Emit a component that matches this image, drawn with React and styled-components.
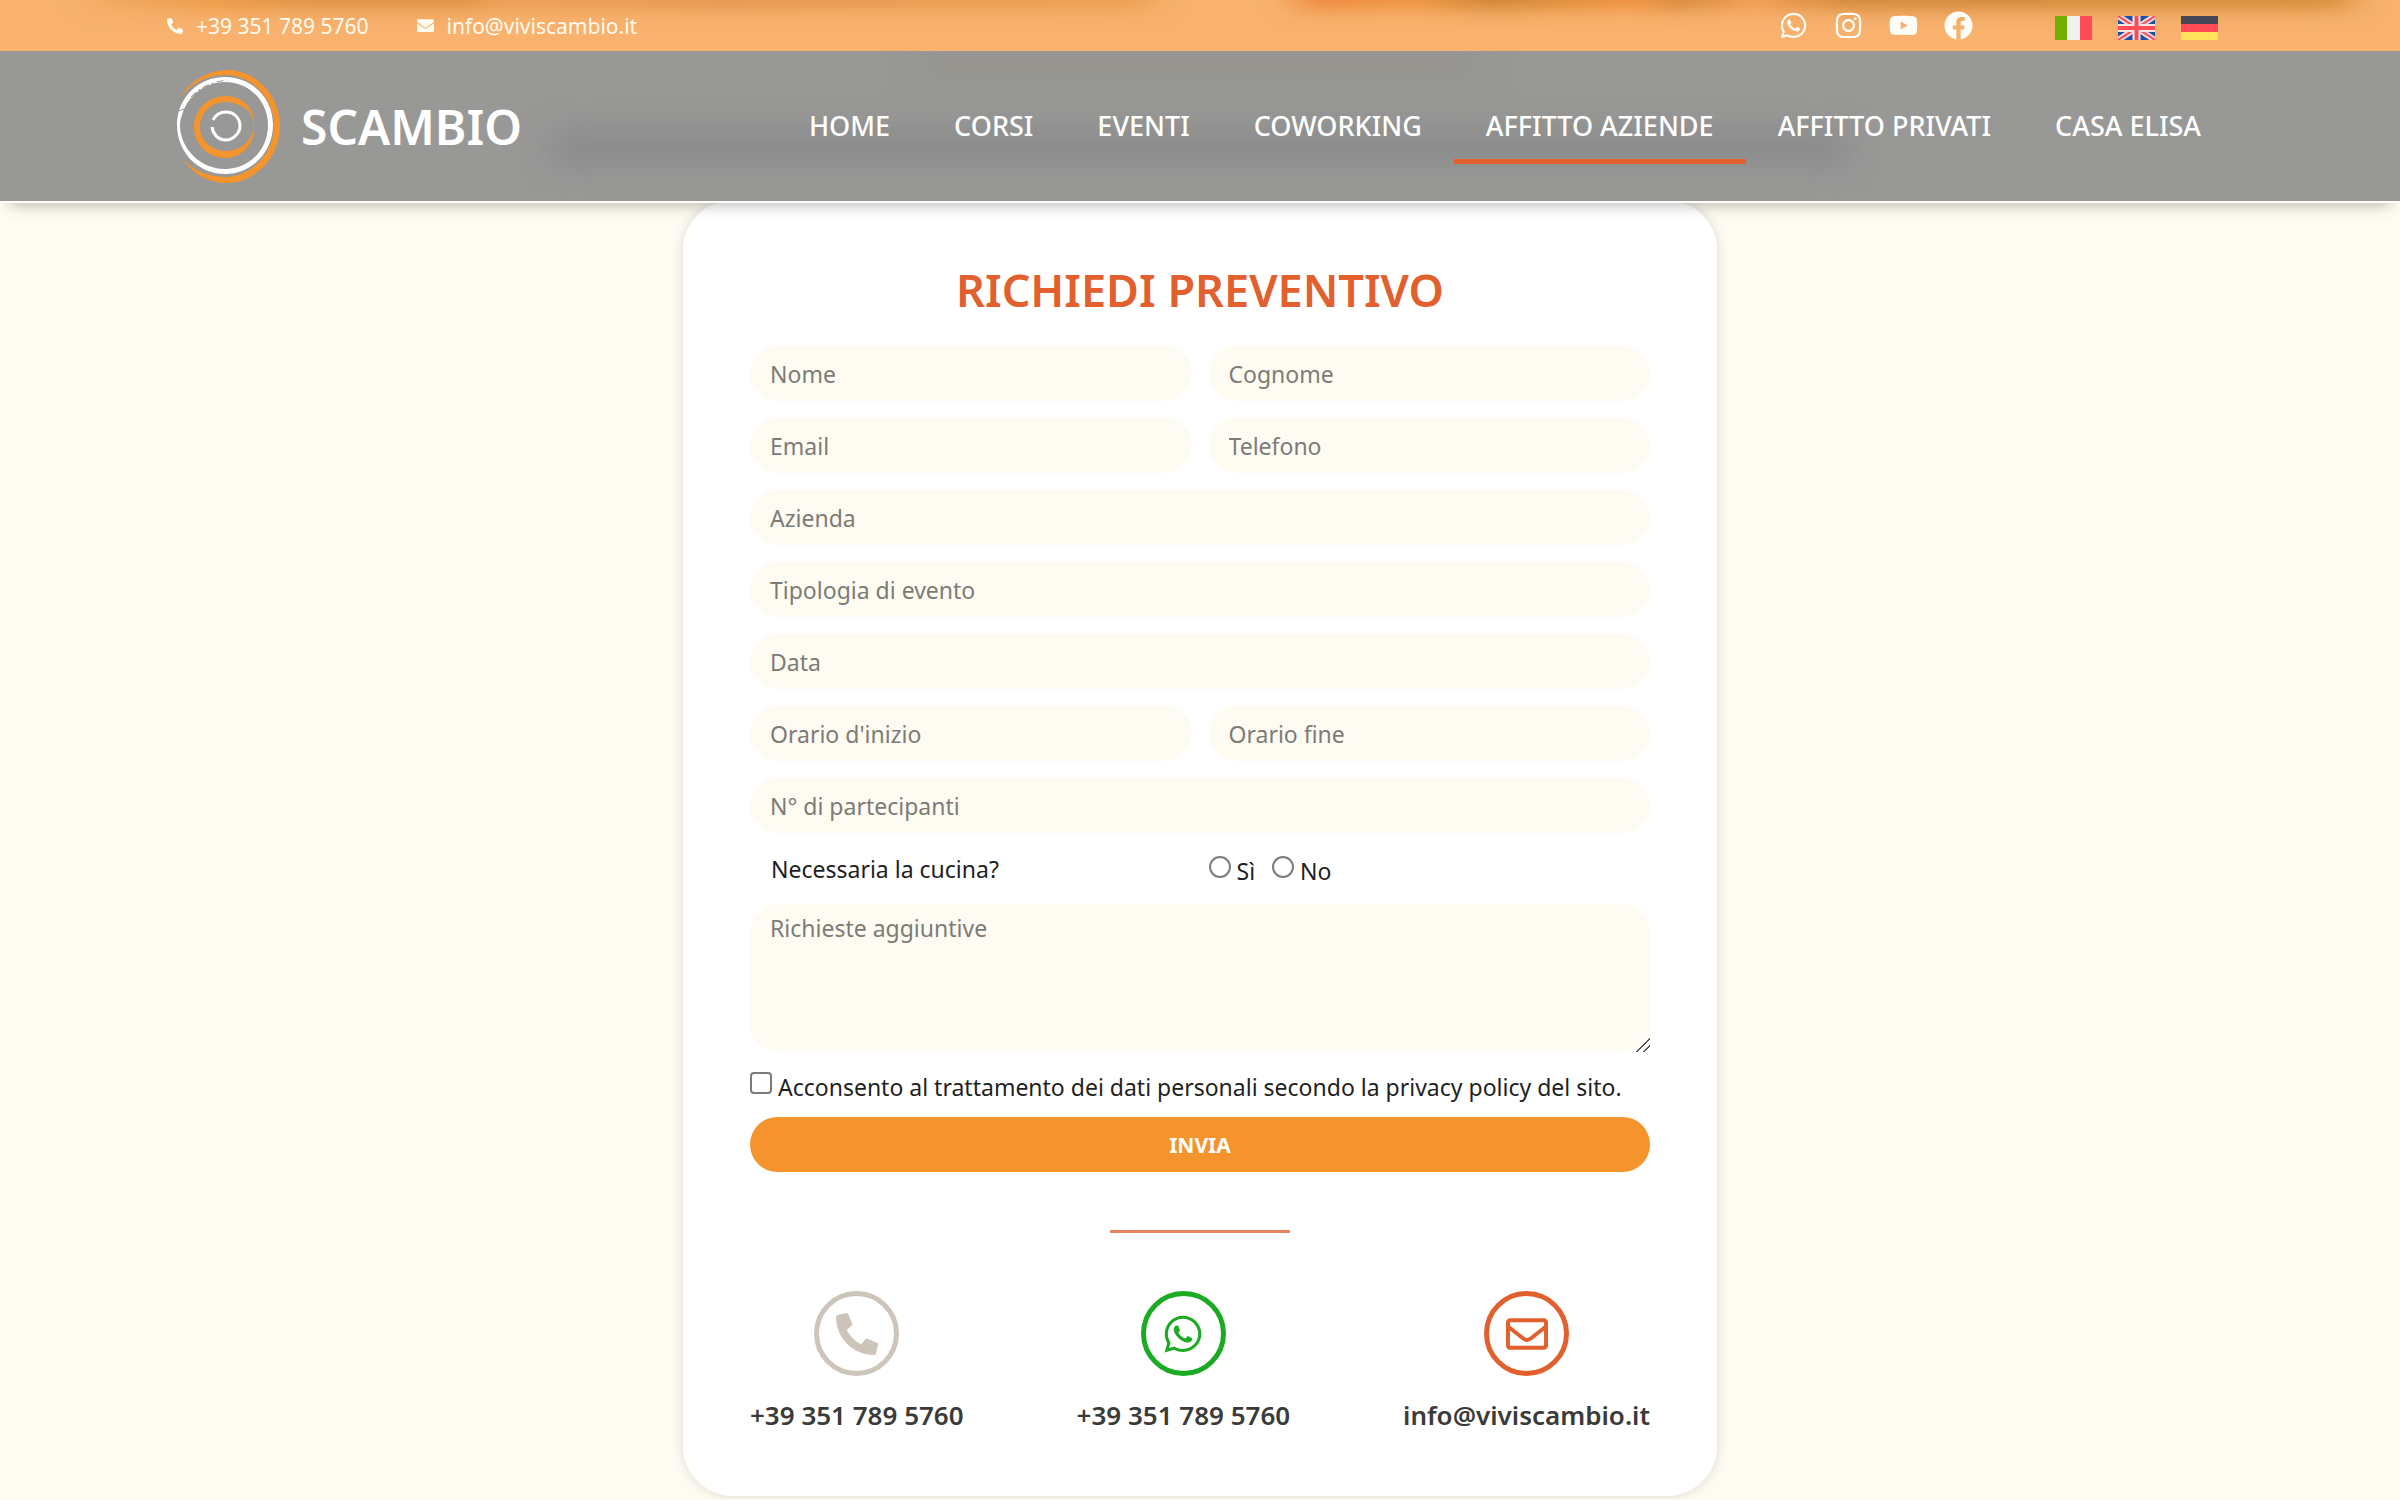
import React from "react";
import styled, { createGlobalStyle } from "styled-components";
import {
  FaPhoneAlt,
  FaEnvelope,
  FaRegEnvelope,
  FaWhatsapp,
  FaInstagram,
  FaYoutube,
  FaFacebook,
} from "react-icons/fa";

const GlobalStyle = createGlobalStyle`
  * {
    box-sizing: border-box;
  }
  body {
    margin: 0;
    background: #fefbf2;
    color: #1f1f1f;
    font-family: "Noto Sans", "Open Sans", sans-serif;
    font-size: 23px;
  }
  a {
    color: inherit;
    text-decoration: none;
  }
`;

const Header = styled.header`
  position: relative;
  z-index: 1;
  border-bottom: 2px solid #fdfdfc;
  box-shadow: 0 12px 14px -10px rgba(0, 0, 0, 0.28);
`;
const TopBar = styled.div`
  position: relative;
  overflow: hidden;
  display: flex;
  align-items: center;
  justify-content: space-between;
  height: 51px;
  padding: 0 182px 0 167px;
  background: #f8b26e;
`;
const TopBlur = styled.div`
  position: absolute;
  top: -16px;
  left: 0;
  right: 0;
  height: 24px;
  filter: blur(10px);
  background: linear-gradient(
    90deg,
    transparent 3%,
    #eea35a 5%,
    #e8963e 9%,
    #d98a3c 14%,
    #d98a3c 19%,
    #e89a50 21%,
    #e0924a 30%,
    #e89a4c 47%,
    transparent 49%,
    transparent 53%,
    #ea8034 55%,
    #ee9038 59%,
    #c67a28 62%,
    #d9852e 65%,
    #f28a38 68%,
    #ce8030 70%,
    #f29a50 73%,
    #c98030 77%,
    #cf8630 97%,
    transparent 99%
  );
`;
const TopGroup = styled.div`
  position: relative;
  display: flex;
  align-items: center;
  gap: ${(props) => props.$gap}px;
`;
const TopLink = styled.a`
  display: flex;
  align-items: center;
  gap: 13px;
  color: #fffbef;
  font-size: 21px;
  line-height: 30px;
`;
const SocialLink = styled.a`
  display: flex;
  justify-content: center;
  width: 30px;
  color: #fffdf8;
  font-size: 29px;
`;
const FlagLink = styled.a`
  display: flex;
  padding-top: 5px;
`;
const NavBar = styled.div`
  position: relative;
  overflow: hidden;
  display: flex;
  align-items: center;
  justify-content: space-between;
  height: 150px;
  padding: 0 167px;
  background: #989896;
`;
const NavBlur = styled.div`
  position: absolute;
  top: ${(props) => props.$top}px;
  left: ${(props) => props.$side}%;
  right: ${(props) => props.$side}%;
  height: ${(props) => props.$height}px;
  background: ${(props) => props.$color};
  filter: blur(16px);
`;
const Brand = styled.a`
  position: relative;
  display: flex;
  align-items: center;
  gap: 17px;
  color: #fff;
  font-size: 48px;
  font-weight: 600;
`;
const Nav = styled.nav`
  position: relative;
  display: flex;
`;
const NavLink = styled.a`
  padding: 20px 32px 15px;
  border-bottom: 5px solid ${(props) => (props.$active ? "#e2602d" : "transparent")};
  color: #fff;
  font-size: 27px;
  font-weight: 500;
  line-height: 36px;
  white-space: nowrap;
`;

const Card = styled.main`
  width: 1034px;
  max-width: 100%;
  margin: -3px auto 3px;
  padding: 60px 67px;
  border-radius: 50px;
  background: #fff;
  box-shadow: 0 0 12px rgba(0, 0, 0, 0.14);
`;
const Title = styled.h1`
  margin: 0 0 26px;
  color: #e2602d;
  font-size: 45px;
  font-weight: 600;
  line-height: 60px;
  text-align: center;
`;
const Form = styled.form`
  display: grid;
  grid-template-columns: 1fr 1fr;
  gap: 17px;
`;
const Field = styled.input`
  grid-column: ${(props) => (props.$half ? "auto" : "1 / -1")};
  width: 100%;
  height: 55px;
  padding: 0 20px;
  border: 0;
  border-radius: 28px;
  background: #fefbf3;
  font: inherit;
  &::placeholder {
    color: #7d7b75;
  }
`;
const TextArea = styled.textarea`
  grid-column: 1 / -1;
  display: block;
  width: 100%;
  height: 148px;
  padding: 7px 20px;
  border: 0;
  border-radius: 28px;
  background: #fefbf3;
  font: inherit;
  line-height: 34px;
  resize: vertical;
  &::placeholder {
    color: #7d7b75;
  }
  &::-webkit-resizer {
    background: linear-gradient(
      135deg,
      transparent 52%,
      #555 52%,
      #555 59%,
      transparent 59%,
      transparent 76%,
      #555 76%,
      #555 83%,
      transparent 83%
    );
  }
`;
const Question = styled.div`
  height: 37px;
  padding-left: 21px;
  line-height: 38px;
`;
const Options = styled.div`
  display: flex;
  gap: 17px;
  height: 37px;
`;
const Option = styled.label`
  display: flex;
  gap: 6px;
  line-height: 42px;
`;
const Tick = styled.input`
  appearance: none;
  flex: none;
  width: 22px;
  height: 22px;
  margin: ${(props) => props.$top}px 0 0;
  border: 2px solid #7c7c7c;
  border-radius: ${(props) => (props.type === "radio" ? "50%" : "4px")};
  background: #fff;
  &:checked {
    background: #f5942c;
  }
`;
const Consent = styled.label`
  grid-column: 1 / -1;
  display: flex;
  gap: 6px;
  height: 31px;
  line-height: 36px;
  white-space: nowrap;
`;
const Submit = styled.button`
  grid-column: 1 / -1;
  height: 55px;
  border: 0;
  border-radius: 28px;
  background: #f5942c;
  color: #fff;
  font: inherit;
  font-size: 21px;
  font-weight: 700;
`;
const Divider = styled.hr`
  width: 180px;
  height: 3px;
  margin: 58px auto;
  border: 0;
  background: #e8835f;
`;
const Contacts = styled.div`
  display: flex;
  justify-content: space-between;
`;
const Contact = styled.a`
  display: flex;
  flex-direction: column;
  align-items: center;
  gap: 18px;
  color: #3b3b39;
  font-size: 26px;
  font-weight: 600;
  line-height: 42px;
`;
const Circle = styled.span`
  display: flex;
  align-items: center;
  justify-content: center;
  width: 85px;
  height: 85px;
  border: 5px solid ${(props) => props.$color};
  border-radius: 50%;
  color: ${(props) => props.$color};
  font-size: 42px;
`;

function Logo() {
  return (
    <svg width="117" height="116" viewBox="0 0 117 116" fill="none" aria-hidden="true">
      {/* outer brush ring, thick on the right and fading to the left */}
      <path d="M12 31 C24 11 43 2 61 2 C91 3 113 29 113 58 C113 88 90 114 60 115 C42 115 27 107 15 91 C28 104 44 109 59 109 C86 108 107 84 107 58 C107 31 86 8 60 7 C42 6 25 14 12 31 Z" fill="#f5942c" />
      {/* white ring */}
      <path fillRule="evenodd" d="M10 57 C10 30 31 9 58 9 C85 9 106 30 106 57 C106 84 85 106 58 106 C31 106 10 84 10 57 Z M13 60 C15 82 34 101 58 101 C82 101 101 82 101 57 C101 33 82 14 58 14 C37 14 20 29 15 47 C13 52 13 55 13 60 Z" fill="#fff" />
      <path d="M24 29 C32 20 44 14 60 12" stroke="#989896" strokeWidth="1" strokeDasharray="7 3 2 3" />
      <path d="M9 44 L17 41" stroke="#989896" strokeWidth="1" />
      {/* inner orange ring, worn thin on the right */}
      <path d="M87 50 C83 35 72 28 58 28 C41 28 27 42 27 59 C27 76 41 90 58 90 C73 90 86 79 87 62 C83 73 74 83 59 83 C45 83 33 73 33 59 C33 45 44 34 58 34 C70 34 81 40 87 50 Z" fill="#f5942c" />
      <path d="M85 46 C87 52 87 60 85 67" stroke="#f5942c" strokeWidth="1" strokeDasharray="6 3" />
      {/* centre */}
      <path d="M46 52 C49 46 54 44 59 44 C67 44 73 50 73 58 C73 65 66 72 59 72 C51 72 46 66 45 59" stroke="#fff" strokeWidth="3" />
    </svg>
  );
}

function ItalyFlag() {
  return (
    <svg width="37" height="24" viewBox="0 0 37 24" aria-hidden="true">
      <rect width="37" height="24" fill="#f0f0f0" />
      <rect width="12" height="24" fill="#73af00" />
      <rect x="25" width="12" height="24" fill="#ff4b55" />
    </svg>
  );
}

function UkFlag() {
  return (
    <svg width="37" height="24" viewBox="0 0 37 24" aria-hidden="true">
      <rect width="37" height="24" fill="#1f4f9f" />
      <path d="M0 0 L37 24 M37 0 L0 24" stroke="#f5d8dc" strokeWidth="6" />
      <path d="M0 0 L37 24 M37 0 L0 24" stroke="#ff4b55" strokeWidth="2" />
      <path d="M18.500 0 V24 M0 12 H37" stroke="#f5e4e6" strokeWidth="8" />
      <path d="M18.500 0 V24 M0 12 H37" stroke="#ff4b55" strokeWidth="4" />
    </svg>
  );
}

function GermanyFlag() {
  return (
    <svg width="37" height="24" viewBox="0 0 37 24" aria-hidden="true">
      <rect width="37" height="8" fill="#464655" />
      <rect y="8" width="37" height="8" fill="#ff4b55" />
      <rect y="16" width="37" height="8" fill="#ffe15a" />
    </svg>
  );
}

const pages = [
  "HOME",
  "CORSI",
  "EVENTI",
  "COWORKING",
  "AFFITTO AZIENDE",
  "AFFITTO PRIVATI",
  "CASA ELISA",
];

const fields = [
  { label: "Nome", half: true },
  { label: "Cognome", half: true },
  { label: "Email", half: true, type: "email" },
  { label: "Telefono", half: true, type: "tel" },
  { label: "Azienda" },
  { label: "Tipologia di evento" },
  { label: "Data" },
  { label: "Orario d'inizio", half: true },
  { label: "Orario fine", half: true },
  { label: "N° di partecipanti" },
];

export default function App() {
  return (
    <>
      <GlobalStyle />
      <Header>
        <TopBar>
          <TopBlur />
          <TopGroup $gap={48}>
            <TopLink href="tel:+393517895760">
              <FaPhoneAlt size={16} />
              +39 351 789 5760
            </TopLink>
            <TopLink href="mailto:info@viviscambio.it">
              <FaEnvelope size={17} />
              info@viviscambio.it
            </TopLink>
          </TopGroup>
          <TopGroup $gap={82}>
            <TopGroup $gap={25}>
              <SocialLink href="#whatsapp" aria-label="WhatsApp">
                <FaWhatsapp />
              </SocialLink>
              <SocialLink href="#instagram" aria-label="Instagram">
                <FaInstagram />
              </SocialLink>
              <SocialLink href="#youtube" aria-label="YouTube">
                <FaYoutube />
              </SocialLink>
              <SocialLink href="#facebook" aria-label="Facebook">
                <FaFacebook />
              </SocialLink>
            </TopGroup>
            <TopGroup $gap={26}>
              <FlagLink href="#it" aria-label="Italiano">
                <ItalyFlag />
              </FlagLink>
              <FlagLink href="#en" aria-label="English">
                <UkFlag />
              </FlagLink>
              <FlagLink href="#de" aria-label="Deutsch">
                <GermanyFlag />
              </FlagLink>
            </TopGroup>
          </TopGroup>
        </TopBar>
        <NavBar>
          <NavBlur $top={2} $side={38} $height={24} $color="#95938b" />
          <NavBlur $top={82} $side={23} $height={28} $color="#868888" />
          <Brand href="#home">
            <Logo />
            SCAMBIO
          </Brand>
          <Nav>
            {pages.map((page) => (
              <NavLink key={page} href="#" $active={page === "AFFITTO AZIENDE"}>
                {page}
              </NavLink>
            ))}
          </Nav>
        </NavBar>
      </Header>
      <Card>
        <Title>RICHIEDI PREVENTIVO</Title>
        <Form>
          {fields.map((field) => (
            <Field
              key={field.label}
              type={field.type || "text"}
              placeholder={field.label}
              aria-label={field.label}
              $half={field.half}
            />
          ))}
          <Question id="kitchen">Necessaria la cucina?</Question>
          <Options role="radiogroup" aria-labelledby="kitchen">
            <Option>
              <Tick type="radio" name="kitchen" $top={6} />
              Sì
            </Option>
            <Option>
              <Tick type="radio" name="kitchen" $top={6} />
              No
            </Option>
          </Options>
          <TextArea placeholder="Richieste aggiuntive" aria-label="Richieste aggiuntive" />
          <Consent>
            <Tick type="checkbox" $top={3} />
            Acconsento al trattamento dei dati personali secondo la privacy policy del sito.
          </Consent>
          <Submit type="submit">INVIA</Submit>
        </Form>
        <Divider />
        <Contacts>
          <Contact href="tel:+393517895760">
            <Circle $color="#cdc5ba">
              <FaPhoneAlt />
            </Circle>
            +39 351 789 5760
          </Contact>
          <Contact href="#whatsapp">
            <Circle $color="#1aab22">
              <FaWhatsapp />
            </Circle>
            +39 351 789 5760
          </Contact>
          <Contact href="mailto:info@viviscambio.it">
            <Circle $color="#e2602d">
              <FaRegEnvelope />
            </Circle>
            info@viviscambio.it
          </Contact>
        </Contacts>
      </Card>
    </>
  );
}
